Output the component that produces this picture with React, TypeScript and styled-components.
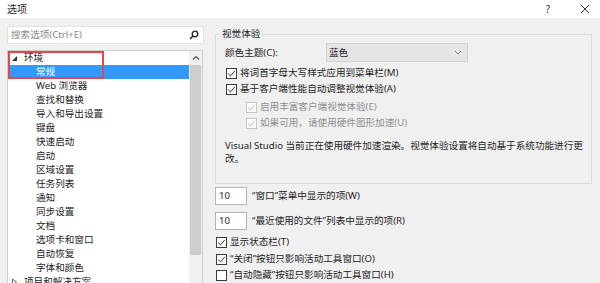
import React from "react";
import styled, { createGlobalStyle } from "styled-components";

const GlobalStyle = createGlobalStyle`
  html, body {
    margin: 0;
    padding: 0;
    background: #f0f0f0;
  }
  * {
    box-sizing: border-box;
  }
`;

const FONT = `"Segoe UI", "Noto Sans", "Noto Sans CJK SC", sans-serif`;

const Dialog = styled.div`
  width: 600px;
  height: 283px;
  overflow: hidden;
  background: #f0f0f0;
  font-family: ${FONT};
  font-size: 9.6px;
  color: #1e1e1e;
  display: flex;
  flex-direction: column;
`;

const TitleBar = styled.div`
  height: 18px;
  flex: none;
  background: #ffffff;
  display: flex;
  align-items: center;
  padding-left: 7px;
  font-size: 10px;
`;

const TitleText = styled.span`
  flex: 1;
  line-height: 12px;
`;

const TitleButton = styled.span`
  width: 14px;
  margin-right: ${(p: { $gap: number }) => p.$gap}px;
  display: flex;
  justify-content: center;
  align-items: center;
  color: #333;
`;

const Body = styled.div`
  flex: 1;
  display: flex;
  padding: 8px 0 0 7px;
  min-height: 0;
`;

const LeftPane = styled.div`
  width: 197px;
  flex: none;
  display: flex;
  flex-direction: column;
  min-height: 0;
`;

const SearchBox = styled.div`
  height: 18px;
  flex: none;
  background: #ffffff;
  border: 1px solid #e3e3e3;
  display: flex;
  align-items: center;
  padding: 0 4px 0 3px;
  color: #8a8a8a;
  line-height: 12px;
`;

const SearchPlaceholder = styled.span`
  flex: 1;
`;

const TreeBox = styled.div`
  position: relative;
  margin-top: 6px;
  flex: 1;
  min-height: 0;
  overflow: hidden;
  background: #ffffff;
  border: 1px solid #cfcfcf;
  border-bottom: none;
  display: flex;
  align-items: flex-start;
  width: 196px;
`;

const TreeList = styled.div`
  flex: 1;
  display: flex;
  flex-direction: column;
`;

const TreeRow = styled.div<{ $indent: number; $selected?: boolean }>`
  height: 14px;
  flex: none;
  display: flex;
  align-items: center;
  padding-left: ${(p) => p.$indent}px;
  line-height: 12px;
  white-space: nowrap;
  background: ${(p) => (p.$selected ? "#3399ff" : "transparent")};
  color: ${(p) => (p.$selected ? "#ffffff" : "#1e1e1e")};
`;

const Expander = styled.span`
  width: 10px;
  display: inline-flex;
  align-items: center;
  justify-content: center;
  margin-right: 5px;
  margin-left: -15px;
`;

const Highlight = styled.div`
  position: absolute;
  left: 0;
  top: 0;
  width: 96px;
  height: 28px;
  border: 2px solid #e0474f;
  pointer-events: none;
`;

const ScrollBar = styled.div`
  width: 13px;
  flex: none;
  align-self: stretch;
  background: #f0f0f0;
  display: flex;
  flex-direction: column;
  align-items: center;
`;

const ScrollArrow = styled.div`
  height: 14px;
  flex: none;
  display: flex;
  align-items: center;
  justify-content: center;
`;

const ScrollThumb = styled.div`
  width: 11px;
  height: 190px;
  flex: none;
  background: #cdcdcd;
`;

const RightPane = styled.div`
  margin-left: 11px;
  width: 377px;
  flex: none;
  display: flex;
  flex-direction: column;
  margin-top: 2px;
`;

const GroupBox = styled.fieldset`
  margin: 0;
  min-width: 0;
  border: 1px solid #dcdcdc;
  padding: 0 8px 18px 4px;
`;

const GroupLegend = styled.legend`
  padding: 0 2px;
  line-height: 12px;
`;

const GroupContent = styled.div`
  padding-left: 5px;
  display: flex;
  flex-direction: column;
`;

const FieldRow = styled.div`
  margin-top: 3px;
  height: 19px;
  display: flex;
  align-items: center;
`;

const FieldLabel = styled.span`
  width: 101px;
  line-height: 12px;
`;

const Select = styled.div`
  width: 142px;
  height: 19px;
  background: #e5e5e5;
  border: 1px solid #d2d2d2;
  display: flex;
  align-items: center;
  padding: 0 5px 0 2px;
  line-height: 12px;
`;

const SelectValue = styled.span`
  flex: 1;
`;

const CheckRow = styled.label<{ $indent?: number; $disabled?: boolean; $top?: number }>`
  height: 16px;
  flex: none;
  display: flex;
  align-items: center;
  gap: 3px;
  margin-left: ${(p) => p.$indent ?? 0}px;
  margin-top: ${(p) => p.$top ?? 0}px;
  line-height: 12px;
  white-space: nowrap;
  color: ${(p) => (p.$disabled ? "#8f8f8f" : "#1e1e1e")};
`;

const Box = styled.span<{ $disabled?: boolean }>`
  width: 11px;
  height: 11px;
  flex: none;
  border: 1px solid ${(p) => (p.$disabled ? "#c4c4c4" : "#3a3a3a")};
  background: #ffffff;
  display: flex;
  align-items: center;
  justify-content: center;
`;

const Note = styled.p`
  margin: 8px 0 0;
  line-height: 13px;
  max-width: 362px;
`;

const NumberRow = styled.div<{ $top: number }>`
  margin-top: ${(p) => p.$top}px;
  height: 18px;
  display: flex;
  align-items: center;
  gap: 5px;
  line-height: 12px;
`;

const NumberInput = styled.div`
  width: 32px;
  height: 18px;
  background: #ffffff;
  border: 1px solid #b4b4b4;
  display: flex;
  align-items: center;
  padding-left: 3px;
`;

function Check({ checked, disabled }: { checked: boolean; disabled?: boolean }) {
  return (
    <Box $disabled={disabled}>
      {checked && (
        <svg width="9" height="9" viewBox="0 0 9 9">
          <path
            d="M1.2 4.6 L3.5 6.9 L7.9 1.8"
            fill="none"
            stroke={disabled ? "#b0b0b0" : "#333"}
            strokeWidth="1"
          />
        </svg>
      )}
    </Box>
  );
}

const treeItems = [
  "Web 浏览器",
  "查找和替换",
  "导入和导出设置",
  "键盘",
  "快速启动",
  "启动",
  "区域设置",
  "任务列表",
  "通知",
  "同步设置",
  "文档",
  "选项卡和窗口",
  "自动恢复",
  "字体和颜色",
];

export default function App() {
  return (
    <Dialog>
      <GlobalStyle />
      <TitleBar>
        <TitleText>选项</TitleText>
        <TitleButton $gap={23}>?</TitleButton>
        <TitleButton $gap={8}>
          <svg width="10" height="10" viewBox="0 0 10 10">
            <path d="M1 1 L9 9 M9 1 L1 9" stroke="#333" strokeWidth="1" />
          </svg>
        </TitleButton>
      </TitleBar>
      <Body>
        <LeftPane>
          <SearchBox>
            <SearchPlaceholder>搜索选项(Ctrl+E)</SearchPlaceholder>
            <svg width="10" height="10" viewBox="0 0 10 10">
              <circle cx="6" cy="4" r="2.8" fill="none" stroke="#222" strokeWidth="1.3" />
              <path d="M4 6 L1 9" stroke="#222" strokeWidth="1.6" />
            </svg>
          </SearchBox>
          <TreeBox>
            <TreeList>
              <TreeRow $indent={16}>
                <Expander>
                  <svg width="7" height="7" viewBox="0 0 7 7">
                    <path d="M6 1 L6 6 L1 6 Z" fill="#333" />
                  </svg>
                </Expander>
                环境
              </TreeRow>
              <TreeRow $indent={28} $selected>
                常规
              </TreeRow>
              {treeItems.map((item) => (
                <TreeRow key={item} $indent={28}>
                  {item}
                </TreeRow>
              ))}
              <TreeRow $indent={16}>
                <Expander>
                  <svg width="7" height="8" viewBox="0 0 7 8">
                    <path d="M1.5 1 L5.5 4 L1.5 7 Z" fill="none" stroke="#555" strokeWidth="0.9" />
                  </svg>
                </Expander>
                项目和解决方案
              </TreeRow>
            </TreeList>
            <ScrollBar>
              <ScrollArrow>
                <svg width="8" height="6" viewBox="0 0 8 6">
                  <path d="M1 4.5 L4 1.5 L7 4.5" fill="none" stroke="#555" strokeWidth="1.2" />
                </svg>
              </ScrollArrow>
              <ScrollThumb />
            </ScrollBar>
            <Highlight />
          </TreeBox>
        </LeftPane>
        <RightPane>
          <GroupBox>
            <GroupLegend>视觉体验</GroupLegend>
            <GroupContent>
              <FieldRow>
                <FieldLabel>颜色主题(C):</FieldLabel>
                <Select>
                  <SelectValue>蓝色</SelectValue>
                  <svg width="8" height="5" viewBox="0 0 8 5">
                    <path d="M1 1 L4 4 L7 1" fill="none" stroke="#777" strokeWidth="0.9" />
                  </svg>
                </Select>
              </FieldRow>
              <CheckRow $indent={1} $top={3}>
                <Check checked />
                将词首字母大写样式应用到菜单栏(M)
              </CheckRow>
              <CheckRow $indent={1}>
                <Check checked />
                基于客户端性能自动调整视觉体验(A)
              </CheckRow>
              <CheckRow $indent={21} $top={2} $disabled>
                <Check checked disabled />
                启用丰富客户端视觉体验(E)
              </CheckRow>
              <CheckRow $indent={21} $disabled>
                <Check checked disabled />
                如果可用，请使用硬件图形加速(U)
              </CheckRow>
              <Note>
                Visual Studio 当前正在使用硬件加速渲染。视觉体验设置将自动基于系统功能进行更改。
              </Note>
            </GroupContent>
          </GroupBox>
          <NumberRow $top={3}>
            <NumberInput>10</NumberInput>
            “窗口”菜单中显示的项(W)
          </NumberRow>
          <NumberRow $top={7}>
            <NumberInput>10</NumberInput>
            “最近使用的文件”列表中显示的项(R)
          </NumberRow>
          <CheckRow $indent={1} $top={4}>
            <Check checked />
            显示状态栏(T)
          </CheckRow>
          <CheckRow $indent={1} $top={1}>
            <Check checked />
            “关闭”按钮只影响活动工具窗口(O)
          </CheckRow>
          <CheckRow $indent={1}>
            <Check checked={false} />
            “自动隐藏”按钮只影响活动工具窗口(H)
          </CheckRow>
        </RightPane>
      </Body>
    </Dialog>
  );
}
